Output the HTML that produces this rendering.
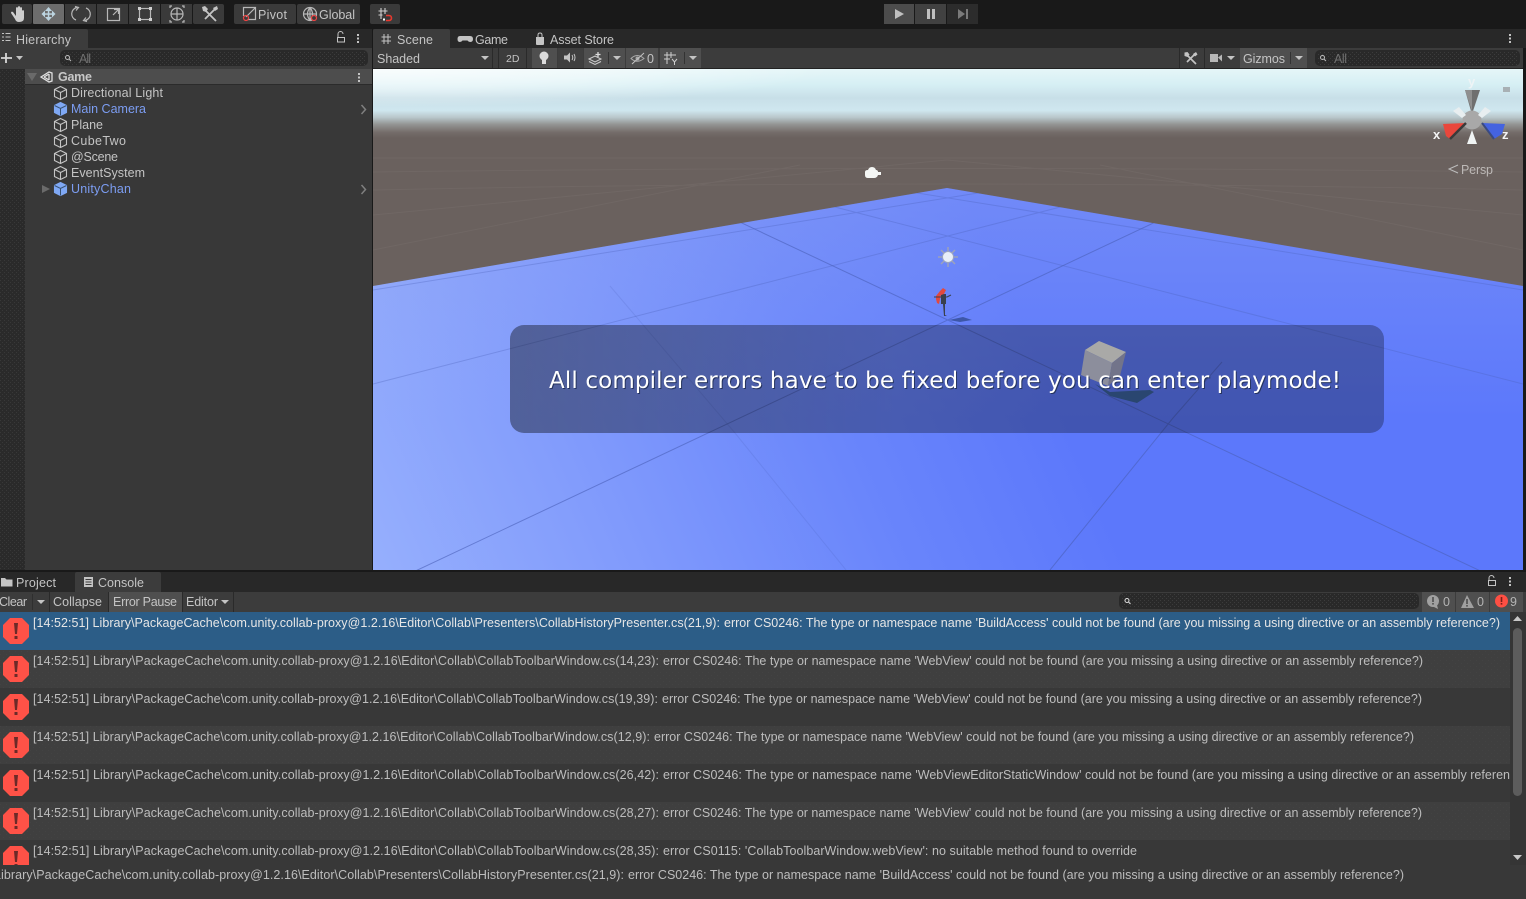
<!DOCTYPE html>
<html><head><meta charset="utf-8"><title>Unity Editor</title>
<style>
html,body{margin:0;padding:0;background:#191919;width:1526px;height:899px;overflow:hidden}
svg{display:block;position:absolute;left:0;top:0}
text{font-family:"Liberation Sans",sans-serif;font-size:12.5px;fill:#c4c4c4;white-space:pre}
.r{fill:#bdbdbd;font-size:12.5px}
.s{fill:#e6e6e6}
.b{fill:#7c9df2}
.ic{fill:none;stroke:#b8b8b8;stroke-width:1.2}
.cube polygon,.cube path{fill:none;stroke:#c4c4c4;stroke-width:1.1}
.pre polygon{fill:#7fa8f4;stroke:#7fa8f4}
.pre path{stroke:#37506f;fill:none;stroke-width:1}
</style></head><body>
<svg width="1526" height="899" viewBox="0 0 1526 899" xmlns="http://www.w3.org/2000/svg">
<defs>
<pattern id="dith" width="4" height="4" patternUnits="userSpaceOnUse"><rect width="4" height="4" fill="#2a2a2a"/><rect width="1" height="1" fill="#383838"/><rect x="2" y="2" width="1" height="1" fill="#383838"/></pattern>
<pattern id="dots" width="6" height="6" patternUnits="userSpaceOnUse"><rect width="1" height="1" fill="#4a4a4a"/><rect x="3" y="3" width="1" height="1" fill="#4a4a4a"/></pattern>
<pattern id="sdots" width="4" height="4" patternUnits="userSpaceOnUse"><rect width="1" height="1" fill="#3c3c3c"/><rect x="2" y="2" width="1" height="1" fill="#3c3c3c"/></pattern>
<linearGradient id="sky" x1="0" y1="69" x2="0" y2="138" gradientUnits="userSpaceOnUse">
<stop offset="0" stop-color="#e6f6f8"/><stop offset=".23" stop-color="#d6eff4"/><stop offset=".42" stop-color="#c8dfe8"/><stop offset=".6" stop-color="#cfe7ef"/><stop offset=".7" stop-color="#b9c7cb"/><stop offset=".8" stop-color="#949695"/><stop offset=".92" stop-color="#746c69"/><stop offset="1" stop-color="#6a615e"/>
</linearGradient>
<radialGradient id="skyl" cx="0" cy="0" r="1"><stop offset="0" stop-color="#fff" stop-opacity=".75"/><stop offset=".5" stop-color="#fff" stop-opacity=".45"/><stop offset="1" stop-color="#fff" stop-opacity="0"/></radialGradient>
<linearGradient id="plane" x1="373" y1="570" x2="1010" y2="290" gradientUnits="userSpaceOnUse">
<stop offset="0" stop-color="#96affd"/><stop offset=".35" stop-color="#809afc"/><stop offset=".7" stop-color="#6985fb"/><stop offset="1" stop-color="#5c78fb"/>
</linearGradient>
<linearGradient id="ptop" x1="0" y1="188" x2="0" y2="420" gradientUnits="userSpaceOnUse"><stop offset="0" stop-color="#a8b8f0" stop-opacity=".28"/><stop offset="1" stop-color="#a8b8f0" stop-opacity="0"/></linearGradient>
<linearGradient id="sdw" x1="510" y1="433" x2="900" y2="433" gradientUnits="userSpaceOnUse"><stop offset="0" stop-color="#000" stop-opacity=".14"/><stop offset="1" stop-color="#000" stop-opacity="0"/></linearGradient>
<clipPath id="scene"><rect x="373" y="69" width="1150" height="501"/></clipPath>
<clipPath id="pl"><polygon points="947,188 1523,286 1523,570 373,570 373,286"/></clipPath>
<clipPath id="rows"><rect x="0" y="612" width="1510" height="253"/></clipPath>
</defs>

<rect width="1526" height="899" fill="#191919"/>

<!-- Top toolbar -->
<g fill="#3a3a3a">
<rect x="2" y="4" width="30" height="20" rx="2"/><rect x="33" y="4" width="31" height="20" rx="1" fill="#6c6c6c"/><rect x="65" y="4" width="31" height="20"/><rect x="97" y="4" width="31" height="20"/><rect x="129" y="4" width="31" height="20"/><rect x="161" y="4" width="31" height="20"/><rect x="193" y="4" width="31" height="20" rx="2"/>
<rect x="234" y="4" width="62" height="20" rx="2"/><rect x="297" y="4" width="63" height="20" rx="2"/><rect x="370" y="4" width="30" height="20" rx="2"/>
<rect x="884" y="4" width="30" height="20" fill="#4c4c4c"/><rect x="915" y="4" width="31" height="20" fill="#414141"/><rect x="947" y="4" width="31" height="20" fill="#2c2c2c"/>
</g>
<!-- hand -->
<path d="M11 13 l4 6 q1 3 4 3 q5 0 5-4 l0-7 q-1-2-2 0 l0 3 l0-6 q-1-2-2 0 l0 5 l0-6 q-1-2-2 0 l0 6 l0-5 q-1-2-2 0 l0 8 l-3-4 q-2-1-2 1z" fill="#cdcdcd"/>
<!-- move -->
<g fill="#bcd4e0" stroke="none"><polygon points="48.5,7 52,11 45,11"/><polygon points="48.5,21 52,17 45,17"/><polygon points="41.5,14 45,10.500 45,17.500"/><polygon points="55.500,14 52,10.500 52,17.500"/><rect x="47.800" y="10" width="1.500" height="8"/><rect x="44" y="13.300" width="9" height="1.500"/></g>
<!-- rotate -->
<path class="ic" d="M76 20 a6.500 6.500 0 0 1 1-12.500 M75 6.500 l3.500 1 -2.500 3 M86 8 a6.500 6.500 0 0 1-1 12.500 M87 21.500 l-3.500-1 2.500-3"/>
<!-- scale -->
<path class="ic" d="M113 15 l5-5 M114 9.500 h4.500 v4.500"/>
<rect class="ic" x="107.500" y="8.500" width="12" height="12"/>
<!-- rect -->
<rect class="ic" x="139.500" y="8.500" width="11" height="11"/>
<g fill="#d0d0d0"><rect x="138" y="7" width="3" height="3"/><rect x="149" y="7" width="3" height="3"/><rect x="138" y="18" width="3" height="3"/><rect x="149" y="18" width="3" height="3"/></g>
<!-- transform -->
<circle class="ic" cx="177" cy="14" r="6"/><path class="ic" d="M171 14 h12 M177 8 v12 M172 6 h-2 v2 M182 6 h2 v2 M172 22 h-2 v-2 M182 22 h2 v-2"/>
<!-- tools -->
<path d="M205 10 l11 11 M215 9 l-10 10" stroke="#c4c4c4" stroke-width="1.800" fill="none"/><path d="M202 7 l3-1 3 3 -2 3 -3-1z M213 8 l4-2 1 3 -3 2z" fill="#c4c4c4"/>
<!-- pivot -->
<path class="ic" stroke-width="1" d="M243.500 16 v-8.500 h12 v12 h-8 M246 17 l9-9"/><circle cx="246" cy="18" r="2.500" fill="none" stroke="#e44" stroke-width="1.200"/>
<text x="258" y="19" textLength="29" lengthAdjust="spacing">Pivot</text>
<!-- global -->
<circle class="ic" stroke-width="1" cx="310" cy="14" r="6.500"/><path class="ic" stroke-width=".9" d="M303.500 14 h13 M310 7.500 v13 M310 7.500 q-5 6.500 0 13 M310 7.500 q5 6.500 0 13"/><circle cx="314" cy="18" r="2.500" fill="#3a3a3a" stroke="#e44" stroke-width="1.200"/>
<text x="319" y="19" textLength="36" lengthAdjust="spacing">Global</text>
<!-- snap -->
<path d="M381 8 v11 M385 8 v6 M378.500 11 h9 M378.500 15 h4" stroke="#d0d0d0" stroke-width="1.100" fill="none"/><path d="M386 15.500 h3 a2.500 2.500 0 0 1 0 5 h-3" stroke="#e8392e" stroke-width="1.600" fill="none"/><rect x="383" y="18.500" width="2" height="2" fill="#fff"/>
<!-- play -->
<polygon points="895,9 904,14 895,19" fill="#c0c0c0"/>
<rect x="927" y="9" width="3" height="10" fill="#c0c0c0"/><rect x="932" y="9" width="3" height="10" fill="#c0c0c0"/>
<polygon points="958,9 965,14 958,19" fill="#7a7a7a"/><rect x="966" y="9" width="2" height="10" fill="#7a7a7a"/>

<!-- Hierarchy panel -->
<rect x="0" y="29" width="372" height="19" fill="#282828"/>
<path d="M0 48 V29 H86 q2 0 2 2 V48z" fill="#3c3c3c"/>
<rect x="0" y="48" width="372" height="21" fill="#3c3c3c"/>
<rect x="0" y="69" width="372" height="501" fill="#383838"/>
<rect x="0" y="69" width="25" height="501" fill="url(#dith)"/>
<rect x="25" y="69" width="347" height="15" fill="#4d4d4d"/>
<rect x="25" y="84" width="347" height="1" fill="#2b2b2b"/>
<path d="M2 33.500 h2 M2 37 h2 M2 40.500 h2 M5.500 33.500 h5 M5.500 37 h5 M5.500 40.500 h5" stroke="#c4c4c4" stroke-width="1"/>
<text x="16" y="44" textLength="55" lengthAdjust="spacing">Hierarchy</text>
<path d="M338 37 v-3 a2.500 2.500 0 0 1 5 0" fill="none" stroke="#c4c4c4"/><rect x="337.500" y="37.500" width="7" height="4.500" fill="none" stroke="#c4c4c4"/>
<g fill="#c4c4c4"><rect x="357" y="34" width="2" height="2"/><rect x="357" y="37.500" width="2" height="2"/><rect x="357" y="41" width="2" height="2"/></g>
<path d="M1 58 h11 M6 53 v10" stroke="#d8d8d8" stroke-width="1.800"/><polygon points="16,56 23,56 19.500,60" fill="#c4c4c4"/>
<rect x="60" y="50" width="308" height="16" rx="5" fill="#292929"/><rect x="62" y="51" width="304" height="14" fill="url(#sdots)"/>
<circle cx="67.500" cy="57.500" r="2" fill="none" stroke="#bbb"/><path d="M69 59 l2 2" stroke="#bbb"/>
<text x="79" y="63" textLength="12" lengthAdjust="spacing" style="fill:#6f6f6f">All</text>
<polygon points="27,73 37,73 32,81" fill="#6a6a6a"/>
<path d="M41 77 l8-5 3 1 v8 l-3 1 z M44 77 l5-3 M44 77 l5 3 M49 74 v6" fill="none" stroke="#e0e0e0" stroke-width="1.300"/>
<text x="58" y="81" textLength="34" lengthAdjust="spacing" font-weight="bold" style="fill:#c8c8c8">Game</text>
<g fill="#c4c4c4"><rect x="358" y="73" width="2" height="2"/><rect x="358" y="76.500" width="2" height="2"/><rect x="358" y="80" width="2" height="2"/></g>

<g class="cube" transform="translate(0,0)"><polygon points="60.500,86.500 66.500,89.500 66.500,96.500 60.500,99.500 54.500,96.500 54.500,89.500"/><path d="M54.500 89.500 L60.500 92.500 L66.500 89.500 M60.500 92.500 V99.500"/></g>
<g class="cube pre" transform="translate(0,16)"><polygon points="60.500,86.500 66.500,89.500 66.500,96.500 60.500,99.500 54.500,96.500 54.500,89.500"/><path d="M54.500 89.500 L60.500 92.500 L66.500 89.500 M60.500 92.500 V99.500"/></g>
<g class="cube" transform="translate(0,32)"><polygon points="60.500,86.500 66.500,89.500 66.500,96.500 60.500,99.500 54.500,96.500 54.500,89.500"/><path d="M54.500 89.500 L60.500 92.500 L66.500 89.500 M60.500 92.500 V99.500"/></g>
<g class="cube" transform="translate(0,48)"><polygon points="60.500,86.500 66.500,89.500 66.500,96.500 60.500,99.500 54.500,96.500 54.500,89.500"/><path d="M54.500 89.500 L60.500 92.500 L66.500 89.500 M60.500 92.500 V99.500"/></g>
<g class="cube" transform="translate(0,64)"><polygon points="60.500,86.500 66.500,89.500 66.500,96.500 60.500,99.500 54.500,96.500 54.500,89.500"/><path d="M54.500 89.500 L60.500 92.500 L66.500 89.500 M60.500 92.500 V99.500"/></g>
<g class="cube" transform="translate(0,80)"><polygon points="60.500,86.500 66.500,89.500 66.500,96.500 60.500,99.500 54.500,96.500 54.500,89.500"/><path d="M54.500 89.500 L60.500 92.500 L66.500 89.500 M60.500 92.500 V99.500"/></g>
<g class="cube pre" transform="translate(0,96)"><polygon points="60.500,86.500 66.500,89.500 66.500,96.500 60.500,99.500 54.500,96.500 54.500,89.500"/><path d="M54.500 89.500 L60.500 92.500 L66.500 89.500 M60.500 92.500 V99.500"/></g>

<text x="71" y="97" textLength="92" lengthAdjust="spacing">Directional Light</text>
<text x="71" y="113" textLength="75" lengthAdjust="spacing" class="b">Main Camera</text>
<text x="71" y="129" textLength="32" lengthAdjust="spacing">Plane</text>
<text x="71" y="145" textLength="55" lengthAdjust="spacing">CubeTwo</text>
<text x="71" y="161" textLength="47" lengthAdjust="spacing">@Scene</text>
<text x="71" y="177" textLength="74" lengthAdjust="spacing">EventSystem</text>
<text x="71" y="193" textLength="60" lengthAdjust="spacing" class="b">UnityChan</text>
<polygon points="42,185 50,189 42,193" fill="#6a6a6a"/>
<path d="M361.500 105 l4 4.500 -4 4.500 M361.500 185 l4 4.500 -4 4.500" fill="none" stroke="#7f7f7f" stroke-width="1.500"/>

<!-- Scene panel header -->
<rect x="373" y="29" width="1153" height="19" fill="#282828"/>
<path d="M373 48 V31 q0-2 2-2 H448 q2 0 2 2 V48z" fill="#3c3c3c"/>
<rect x="373" y="48" width="1150" height="21" fill="#3c3c3c"/>
<rect x="373" y="68" width="1150" height="1" fill="#222"/>
<rect x="492" y="48" width="1" height="20" fill="#2a2a2a"/><rect x="498" y="48" width="1" height="20" fill="#2a2a2a"/><rect x="526" y="48" width="1" height="20" fill="#2a2a2a"/>
<path d="M384 34 v10 M388 34 v10 M381.500 37 h9.500 M381.500 41 h9.500" stroke="#c4c4c4" stroke-width="1"/>
<text x="397" y="44" textLength="36" lengthAdjust="spacing">Scene</text>
<path d="M460 36 h10 q3 0 3 3 q0 3-3 3 q-1.500 0-2.500-1.500 h-5 q-1 1.500-2.500 1.500 q-2.500 0-2.500-3 q0-3 2.500-3z" fill="#c4c4c4"/>
<text x="475" y="44" textLength="33" lengthAdjust="spacing">Game</text>
<path d="M536 37 h8 v7 q0 1-1 1 h-6 q-1 0-1-1z" fill="#c4c4c4"/><path d="M538 37 v-2 q0-2 2-2 q2 0 2 2 v2" fill="none" stroke="#c4c4c4"/>
<text x="550" y="44" textLength="64" lengthAdjust="spacing">Asset Store</text>
<g fill="#c4c4c4"><rect x="1509" y="34" width="2" height="2"/><rect x="1509" y="37.500" width="2" height="2"/><rect x="1509" y="41" width="2" height="2"/></g>
<text x="377" y="63" textLength="43" lengthAdjust="spacing">Shaded</text>
<polygon points="481,56 489,56 485,60" fill="#c4c4c4"/>
<text x="506" y="62" style="font-size:10.500px">2D</text>
<g fill="#4f4f4f"><rect x="532" y="48" width="25" height="20"/><rect x="584" y="48" width="41" height="20"/><rect x="626" y="48" width="32" height="20"/><rect x="660" y="48" width="41" height="20"/><rect x="1240" y="48" width="67" height="20"/></g>
<rect x="558" y="48" width="25" height="20" fill="#3f3f3f"/>
<circle cx="544" cy="56" r="4.500" fill="#dcdcdc"/><rect x="542" y="60" width="4" height="4" fill="#dcdcdc"/>
<path d="M564 55.500 h3 l3-3 v10 l-3-3 h-3z" fill="#c4c4c4"/><path d="M572 55 q1.500 2.500 0 5 M574 54 q2 3.500 0 7" stroke="#c4c4c4" fill="none"/>
<path d="M589 59 l6-3 6 3 -6 3z M589 61.500 l6 3 6-3" fill="none" stroke="#cfcfcf" stroke-width="1"/><path d="M598 52 v5 M595.500 54.500 h5" stroke="#dcdcdc" stroke-width="1.300"/>
<rect x="608" y="52" width="1" height="12" fill="#333"/><polygon points="613,56 621,56 617,60" fill="#c4c4c4"/>
<path d="M631 58.500 q6-6 13 0 q-7 5.500-13 0z" fill="none" stroke="#a8a8a8"/><circle cx="637.500" cy="58.500" r="2" fill="#a8a8a8"/><path d="M632 64 l12-11" stroke="#c4c4c4"/>
<text x="647" y="63" textLength="8" lengthAdjust="spacing">0</text>
<path d="M667 52 v12 M671 52 v6 M664 55 h12 M664 59 h6 M672 59 l2.500 3 2.500-3 M674.500 62 v3" stroke="#cfcfcf" fill="none"/>
<rect x="684" y="52" width="1" height="12" fill="#333"/><polygon points="689,56 697,56 693,60" fill="#c4c4c4"/>
<rect x="1179" y="48" width="1" height="20" fill="#2a2a2a"/><rect x="1204" y="48" width="1" height="20" fill="#2a2a2a"/>
<path d="M1187 55 l9 9 M1195 54 l-8 8" stroke="#c4c4c4" stroke-width="1.700"/><path d="M1184.500 52.500 l3-.5 2 2.500 -2 2.500 -3-1z M1193 54 l3-2 1.500 2.500 -2.500 2z" fill="#c4c4c4"/>
<rect x="1210" y="54" width="8" height="8" fill="#b8b8b8"/><polygon points="1218,57.500 1222,54.500 1222,61.500" fill="#b8b8b8"/><polygon points="1227,56 1235,56 1231,60" fill="#c4c4c4"/>
<text x="1243" y="63" textLength="42" lengthAdjust="spacing">Gizmos</text>
<rect x="1290" y="52" width="1" height="12" fill="#333"/><polygon points="1295,56 1303,56 1299,60" fill="#c4c4c4"/>
<rect x="1315" y="50" width="205" height="16" rx="5" fill="#292929"/><rect x="1318" y="51" width="200" height="14" fill="url(#sdots)"/>
<circle cx="1322.500" cy="57.500" r="2" fill="none" stroke="#bbb"/><path d="M1324 59 l2 2" stroke="#bbb"/>
<text x="1334" y="63" textLength="13" lengthAdjust="spacing" style="fill:#6f6f6f">All</text>

<!-- Scene view -->
<g clip-path="url(#scene)">
<rect x="373" y="69" width="1150" height="501" fill="#6a615e"/>
<rect x="373" y="69" width="1150" height="72" fill="url(#sky)"/>
<rect x="373" y="69" width="460" height="38" fill="url(#skyl)"/>
<g stroke="#7a7270" stroke-width="1" opacity=".35" fill="none">
<path d="M373 158 H1523 M373 172 Q948 165 1523 172 M373 190 Q948 178 1523 190 M373 215 L947 160 M1523 215 L947 160 M373 250 L800 165 M1523 250 L1100 165"/>
</g>
<polygon points="947,188 1523,286 1523,570 373,570 373,286" fill="url(#plane)"/>
<polygon points="947,188 1523,286 1523,420 373,420 373,286" fill="url(#ptop)"/>
<g clip-path="url(#pl)" fill="none" stroke="#4a5fb8" stroke-width="1">
<path opacity=".32" d="M555 135 L1523 290 M555 135 L1523 384 M1340 135 L373 290 M1340 135 L373 384"/>
<path opacity=".18" d="M846 570 L735 433 L610 286"/>
<path opacity=".6" d="M555 135 L1523 591 M1340 135 L373 591 M1050 570 L1173 418 L1222 362"/>
</g>

<!-- camera gizmo -->
<path d="M865 172 q0-2 3-2 q1-3 4-3 q3 0 4 3 q2 0 2 2 l3 0 0 3 -3 0 q-1 3-4 3 h-6 q-3 0-3-3z" fill="#f4f6f4"/>
<!-- sun gizmo -->
<g stroke="#9ca2bb" stroke-width="1.500"><path d="M948 247 v20 M938 257 h20 M941 250 l14 14 M955 250 l-14 14"/></g>
<circle cx="948" cy="257" r="5.500" fill="#e8eef8" stroke="#9aa4c2"/>
<!-- unity chan -->
<path d="M941 294 h5 v10 h-1 v11 l2 1 h-3 l-1-12 h-2z" fill="#39404e"/>
<path d="M936 296 l4-5 3-3 3 2 -2 4 -3 1 -1 4 -1 5 -2-1 -1-4z" fill="#e2493f"/>
<path d="M934 297 h13 l4-2" stroke="#39404e" fill="none"/>
<path d="M949 320 l14-3 9 3 -12 2z" fill="#3d57a8"/>

<!-- overlay -->
<rect x="510" y="325" width="874" height="108" rx="14" fill="#000" opacity=".29"/>
<rect x="510" y="325" width="874" height="108" rx="14" fill="url(#sdw)"/>
<polygon points="1095,384 1110,392 1150,390 1154,392 1137,403 1110,396" fill="#2a4670"/>
<polygon points="1085,350 1099,341 1126,352 1112,363" fill="#a9a9a7"/>
<polygon points="1085,350 1112,363 1108,386 1081,375" fill="#8c8e9c"/>
<polygon points="1112,363 1126,352 1120,376 1108,386" fill="#72748a"/>
<text x="549" y="388" textLength="792" lengthAdjust="spacing" style="font-family:'DejaVu Sans',sans-serif;font-size:23px;fill:#fff;filter:drop-shadow(1px 1px 0 #26345f)">All compiler errors have to be fixed before you can enter playmode!</text>

<!-- orientation gizmo -->
<polygon points="1465,90 1480,90 1473,111 1471,111" fill="#6f6f6f"/>
<polygon points="1465,90 1472,90 1472,111" fill="#8f8f8f"/>
<circle cx="1472" cy="120" r="9.500" fill="#a8a8a8"/>
<polygon points="1453,111 1459,107 1466,115 1462,118" fill="#e8eef0"/>
<polygon points="1491,111 1485,107 1478,115 1482,118" fill="#e8eef0"/>
<polygon points="1472,130 1477,144 1467,144" fill="#f0f4f4"/>
<polygon points="1443,124 1466,123 1450,139 1446,136" fill="#e9473c"/>
<path d="M1466 123 L1450 139" stroke="#3a3a3a" stroke-width="2.500"/>
<polygon points="1482,123 1505,124 1502,134 1494,139" fill="#4463e0"/>
<path d="M1482 123 L1494 139" stroke="#3a4a80" stroke-width="2"/>
<text x="1468" y="86" style="font-size:13px;font-weight:bold;fill:#eef4f6">y</text>
<text x="1433" y="139" style="font-size:13px;font-weight:bold;fill:#f4f4f4">x</text>
<text x="1502" y="139" style="font-size:13px;font-weight:bold;fill:#f4f4f4">z</text>
<rect x="1503" y="87" width="7" height="5" fill="#a8b0b4"/>
<path d="M1458 165 l-9 4 9 4" fill="none" stroke="#bdbdbd"/>
<text x="1461" y="174" textLength="32" lengthAdjust="spacing" style="fill:#bdb9b7">Persp</text>
</g>

<!-- Console panel -->
<rect x="0" y="572" width="1526" height="20" fill="#282828"/>
<path d="M75 592 V574 q0-2 2-2 H159 q2 0 2 2 V592z" fill="#3c3c3c"/>
<rect x="0" y="592" width="1526" height="20" fill="#3c3c3c"/>
<rect x="0" y="865" width="1526" height="34" fill="#383838"/>
<rect x="0" y="864" width="1526" height="1" fill="#1e1e1e"/>
<path d="M1 578 h4 l1.500 1.500 h6 v7 h-11.500z" fill="#c4c4c4"/>
<text x="16" y="587" textLength="40" lengthAdjust="spacing">Project</text>
<rect x="84" y="577" width="9" height="10" fill="#c4c4c4"/><path d="M85.500 579.500 h6 M85.500 582 h6 M85.500 584.500 h6" stroke="#3c3c3c"/>
<text x="98" y="587" textLength="46" lengthAdjust="spacing">Console</text>
<path d="M1489 580 v-2 a2.500 2.500 0 0 1 5 0" fill="none" stroke="#c4c4c4"/><rect x="1488.500" y="580.500" width="7" height="5" fill="none" stroke="#c4c4c4"/>
<g fill="#c4c4c4"><rect x="1509" y="577" width="2" height="2"/><rect x="1509" y="580.500" width="2" height="2"/><rect x="1509" y="584" width="2" height="2"/></g>
<text x="-1" y="606" textLength="28" lengthAdjust="spacing">Clear</text>
<rect x="32" y="594" width="1" height="16" fill="#2f2f2f"/><polygon points="37,600 45,600 41,604" fill="#c4c4c4"/>
<rect x="49" y="592" width="1" height="20" fill="#2a2a2a"/><rect x="108" y="592" width="1" height="20" fill="#2a2a2a"/>
<text x="53" y="606" textLength="49" lengthAdjust="spacing">Collapse</text>
<rect x="109" y="592" width="73" height="20" fill="#4f4f4f"/>
<text x="113" y="606" textLength="64" lengthAdjust="spacing">Error Pause</text>
<text x="186" y="606" textLength="32" lengthAdjust="spacing">Editor</text>
<polygon points="221,600 229,600 225,604" fill="#c4c4c4"/>
<rect x="182" y="592" width="1" height="20" fill="#2a2a2a"/><rect x="233" y="592" width="1" height="20" fill="#2a2a2a"/>
<rect x="1119" y="593" width="300" height="16" rx="5" fill="#292929"/><rect x="1122" y="594" width="295" height="14" fill="url(#sdots)"/>
<circle cx="1127" cy="600.500" r="2" fill="none" stroke="#ddd"/><path d="M1128.500 602 l2 2" stroke="#ddd"/>
<g fill="#4f4f4f"><rect x="1422" y="592" width="33" height="20"/><rect x="1456" y="592" width="33" height="20"/><rect x="1490" y="592" width="33" height="20"/></g>
<circle cx="1433" cy="601" r="6" fill="#a0a0a0"/><polygon points="1430,605 1437,605 1438,609" fill="#a0a0a0"/><rect x="1432.200" y="597" width="1.600" height="5" fill="#4f4f4f"/><rect x="1432.200" y="603" width="1.600" height="1.600" fill="#4f4f4f"/>
<text x="1443" y="606" textLength="8" lengthAdjust="spacing" style="fill:#b4b4b4">0</text>
<polygon points="1467,595 1474,608 1461,608" fill="#a0a0a0"/><rect x="1466.200" y="599" width="1.600" height="5" fill="#4f4f4f"/><rect x="1466.200" y="605" width="1.600" height="1.600" fill="#4f4f4f"/>
<text x="1477" y="606" textLength="8" lengthAdjust="spacing" style="fill:#b4b4b4">0</text>
<circle cx="1501.500" cy="601" r="6.500" fill="#fe4f43"/><rect x="1500.700" y="597" width="1.600" height="5" fill="#7a1f1a"/><rect x="1500.700" y="603" width="1.600" height="1.600" fill="#7a1f1a"/>
<text x="1510" y="606" textLength="8" lengthAdjust="spacing" style="fill:#b4b4b4">9</text>

<!-- rows -->
<rect x="0" y="612" width="1510" height="38" fill="#2c5d87"/>
<rect x="0" y="650" width="1510" height="38" fill="#3f3f3f"/><rect x="0" y="650" width="1510" height="38" fill="url(#dots)" opacity=".4"/>
<rect x="0" y="688" width="1510" height="38" fill="#383838"/>
<rect x="0" y="726" width="1510" height="38" fill="#3f3f3f"/><rect x="0" y="726" width="1510" height="38" fill="url(#dots)" opacity=".4"/>
<rect x="0" y="764" width="1510" height="38" fill="#383838"/>
<rect x="0" y="802" width="1510" height="38" fill="#3f3f3f"/><rect x="0" y="802" width="1510" height="38" fill="url(#dots)" opacity=".4"/>
<rect x="0" y="840" width="1510" height="25" fill="#383838"/>

<g clip-path="url(#rows)">
<g transform="translate(0,0)"><polygon points="10,618 22,618 29,625 29,637 22,644 10,644 3,637 3,625" fill="#fe5247"/><polygon points="14,623 18,623 17,634 15,634" fill="#6b2a28"/><rect x="14.500" y="636" width="3" height="3" fill="#6b2a28"/></g>
<g transform="translate(0,38)"><polygon points="10,618 22,618 29,625 29,637 22,644 10,644 3,637 3,625" fill="#fe5247"/><polygon points="14,623 18,623 17,634 15,634" fill="#6b2a28"/><rect x="14.500" y="636" width="3" height="3" fill="#6b2a28"/></g>
<g transform="translate(0,76)"><polygon points="10,618 22,618 29,625 29,637 22,644 10,644 3,637 3,625" fill="#fe5247"/><polygon points="14,623 18,623 17,634 15,634" fill="#6b2a28"/><rect x="14.500" y="636" width="3" height="3" fill="#6b2a28"/></g>
<g transform="translate(0,114)"><polygon points="10,618 22,618 29,625 29,637 22,644 10,644 3,637 3,625" fill="#fe5247"/><polygon points="14,623 18,623 17,634 15,634" fill="#6b2a28"/><rect x="14.500" y="636" width="3" height="3" fill="#6b2a28"/></g>
<g transform="translate(0,152)"><polygon points="10,618 22,618 29,625 29,637 22,644 10,644 3,637 3,625" fill="#fe5247"/><polygon points="14,623 18,623 17,634 15,634" fill="#6b2a28"/><rect x="14.500" y="636" width="3" height="3" fill="#6b2a28"/></g>
<g transform="translate(0,190)"><polygon points="10,618 22,618 29,625 29,637 22,644 10,644 3,637 3,625" fill="#fe5247"/><polygon points="14,623 18,623 17,634 15,634" fill="#6b2a28"/><rect x="14.500" y="636" width="3" height="3" fill="#6b2a28"/></g>
<g transform="translate(0,228)"><polygon points="10,618 22,618 29,625 29,637 22,644 10,644 3,637 3,625" fill="#fe5247"/><polygon points="14,623 18,623 17,634 15,634" fill="#6b2a28"/><rect x="14.500" y="636" width="3" height="3" fill="#6b2a28"/></g>

<text x="33" y="627" textLength="687" lengthAdjust="spacing" class="r s">[14:52:51] Library\PackageCache\com.unity.collab-proxy@1.2.16\Editor\Collab\Presenters\CollabHistoryPresenter.cs(21,9):</text>
<text x="724" y="627" textLength="776" lengthAdjust="spacing" class="r s">error CS0246: The type or namespace name 'BuildAccess' could not be found (are you missing a using directive or an assembly reference?)</text>
<text x="33" y="665" textLength="626" lengthAdjust="spacing" class="r">[14:52:51] Library\PackageCache\com.unity.collab-proxy@1.2.16\Editor\Collab\CollabToolbarWindow.cs(14,23):</text>
<text x="663" y="665" textLength="760" lengthAdjust="spacing" class="r">error CS0246: The type or namespace name 'WebView' could not be found (are you missing a using directive or an assembly reference?)</text>
<text x="33" y="703" textLength="625" lengthAdjust="spacing" class="r">[14:52:51] Library\PackageCache\com.unity.collab-proxy@1.2.16\Editor\Collab\CollabToolbarWindow.cs(19,39):</text>
<text x="662" y="703" textLength="760" lengthAdjust="spacing" class="r">error CS0246: The type or namespace name 'WebView' could not be found (are you missing a using directive or an assembly reference?)</text>
<text x="33" y="741" textLength="617" lengthAdjust="spacing" class="r">[14:52:51] Library\PackageCache\com.unity.collab-proxy@1.2.16\Editor\Collab\CollabToolbarWindow.cs(12,9):</text>
<text x="654" y="741" textLength="760" lengthAdjust="spacing" class="r">error CS0246: The type or namespace name 'WebView' could not be found (are you missing a using directive or an assembly reference?)</text>
<text x="33" y="779" textLength="626" lengthAdjust="spacing" class="r">[14:52:51] Library\PackageCache\com.unity.collab-proxy@1.2.16\Editor\Collab\CollabToolbarWindow.cs(26,42):</text>
<text x="663" y="779" textLength="847" lengthAdjust="spacing" class="r">error CS0246: The type or namespace name 'WebViewEditorStaticWindow' could not be found (are you missing a using directive or an assembly referen</text>
<text x="33" y="817" textLength="626" lengthAdjust="spacing" class="r">[14:52:51] Library\PackageCache\com.unity.collab-proxy@1.2.16\Editor\Collab\CollabToolbarWindow.cs(28,27):</text>
<text x="663" y="817" textLength="759" lengthAdjust="spacing" class="r">error CS0246: The type or namespace name 'WebView' could not be found (are you missing a using directive or an assembly reference?)</text>
<text x="33" y="855" textLength="626" lengthAdjust="spacing" class="r">[14:52:51] Library\PackageCache\com.unity.collab-proxy@1.2.16\Editor\Collab\CollabToolbarWindow.cs(28,35):</text>
<text x="663" y="855" textLength="474" lengthAdjust="spacing" class="r">error CS0115: 'CollabToolbarWindow.webView': no suitable method found to override</text>
</g>

<!-- scrollbar -->
<rect x="1510" y="612" width="16" height="253" fill="#353535"/>
<rect x="1513" y="628" width="9" height="168" rx="4.500" fill="#5c5c5c"/>
<polygon points="1517.500,616 1522,621 1513,621" fill="#c8c8c8"/>
<polygon points="1517.500,860 1522,855 1513,855" fill="#c8c8c8"/>

<text x="-6" y="879" textLength="630" lengthAdjust="spacing" class="r">Library\PackageCache\com.unity.collab-proxy@1.2.16\Editor\Collab\Presenters\CollabHistoryPresenter.cs(21,9):</text>
<text x="628" y="879" textLength="776" lengthAdjust="spacing" class="r">error CS0246: The type or namespace name 'BuildAccess' could not be found (are you missing a using directive or an assembly reference?)</text>
</svg>
</body></html>
